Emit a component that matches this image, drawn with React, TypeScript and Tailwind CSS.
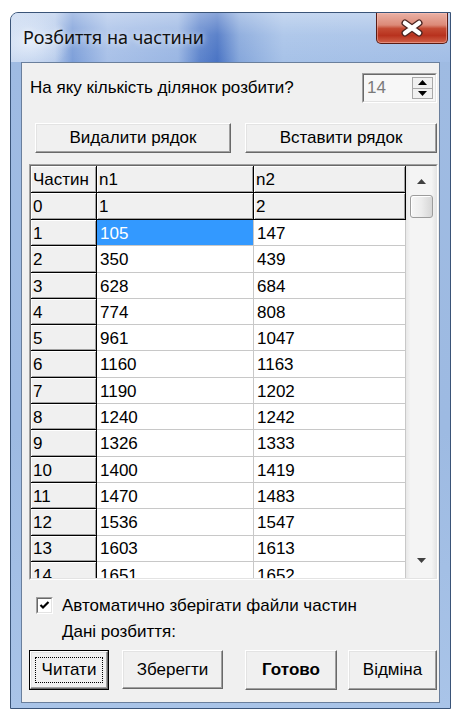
import React from "react";

const data: [string, string, string][] = [
  ["1", "105", "147"],
  ["2", "350", "439"],
  ["3", "628", "684"],
  ["4", "774", "808"],
  ["5", "961", "1047"],
  ["6", "1160", "1163"],
  ["7", "1190", "1202"],
  ["8", "1240", "1242"],
  ["9", "1326", "1333"],
  ["10", "1400", "1419"],
  ["11", "1470", "1483"],
  ["12", "1536", "1547"],
  ["13", "1603", "1613"],
  ["14", "1651", "1652"],
];

const fixedCell =
  "box-border h-full flex items-center pl-[2px] pt-[2px] bg-[#f0f0f0] border-r border-b border-black shadow-[inset_1px_1px_0_#ffffff,inset_-1px_-1px_0_#a0a0a0] overflow-hidden whitespace-nowrap";
const dataCell =
  "box-border h-full flex items-center pl-[3px] pt-[2px] bg-white border-r border-b border-[#c8c8c8] overflow-hidden whitespace-nowrap";

function Button({
  children,
  className = "",
  bold = false,
  isDefault = false,
}: {
  children: React.ReactNode;
  className?: string;
  bold?: boolean;
  isDefault?: boolean;
}) {
  const face = (
    <div className="box-border w-full h-full flex items-center justify-center bg-[#f0f0f0] border border-t-white border-l-white border-r-[#696969] border-b-[#696969] shadow-[inset_-1px_-1px_0_#a0a0a0,inset_1px_1px_0_#e3e3e3]">
      {isDefault ? (
        <div className="box-border flex items-center justify-center w-[calc(100%-8px)] h-[calc(100%-10px)] border border-dotted border-black">
          <span className={bold ? "font-bold" : ""}>{children}</span>
        </div>
      ) : (
        <span className={bold ? "font-bold" : ""}>{children}</span>
      )}
    </div>
  );
  return (
    <div className={`box-border shrink-0 ${isDefault ? "border border-black" : ""} ${className}`}>
      {face}
    </div>
  );
}

function ArrowUp({ className = "" }: { className?: string }) {
  return (
    <svg width="9" height="5" viewBox="0 0 9 5" className={className}>
      <path d="M0 5 L4.5 0 L9 5 Z" fill="currentColor" />
    </svg>
  );
}

function ArrowDown({ className = "" }: { className?: string }) {
  return (
    <svg width="9" height="5" viewBox="0 0 9 5" className={className}>
      <path d="M0 0 L9 0 L4.5 5 Z" fill="currentColor" />
    </svg>
  );
}

export default function App() {
  return (
    <div className="w-[451px] h-[709px] bg-white overflow-hidden pt-[12px] pl-[10px] font-['Liberation_Sans',Arial,sans-serif] text-[17px] text-black">
      {/* window frame */}
      <div className="relative box-border w-[441px] h-[697px] rounded-tl-[8px] border border-[#3a5478] bg-[linear-gradient(180deg,#9fbbe2_0%,#9dbae2_60%,#a9c4e8_100%)] flex flex-col">
        {/* title bar */}
        <div className="relative h-[49px] shrink-0 rounded-tl-[7px] overflow-hidden bg-[linear-gradient(90deg,#c2d4ee_0%,#b4c9ea_10%,#7d9fd9_14%,#a9c1e8_22%,#9ab6e3_38%,#5d84cc_43%,#4a74c4_47%,#86a7db_52%,#a7c2e8_62%,#a2bee6_100%)]">
          <div className="absolute inset-0 bg-[linear-gradient(180deg,rgba(255,255,255,0.35)_0%,rgba(255,255,255,0.1)_45%,rgba(255,255,255,0)_100%)]" />
          <div className="absolute left-[0px] top-[0px] w-[60px] h-[49px] bg-[radial-gradient(ellipse_at_30%_60%,rgba(235,242,252,0.8),rgba(235,242,252,0)_70%)]" />
          <div className="relative pl-[12px] pt-[12px] font-['Noto_Sans',sans-serif] text-[18px] leading-[24px] text-[#111] [text-shadow:0_0_6px_rgba(255,255,255,0.9)]">
            Розбиття на частини
          </div>
        </div>
        {/* close button */}
        <div className="absolute top-[0px] left-[365px] w-[72px] h-[31px] box-border rounded-b-[5px] border border-t-0 border-[#5a1c14] bg-[linear-gradient(180deg,#eab1a5_0%,#dc8a78_40%,#c44a33_52%,#b8321e_75%,#d0624a_100%)] flex items-center justify-center shadow-[inset_0_0_0_1px_rgba(255,200,190,0.45)]">
          <svg width="26" height="20" viewBox="0 0 26 20">
            <path d="M6 5 L20 15 M20 5 L6 15" stroke="#4a2420" strokeWidth="7" strokeLinecap="round" />
            <path d="M6 5 L20 15 M20 5 L6 15" stroke="#ffffff" strokeWidth="4.5" strokeLinecap="round" />
          </svg>
        </div>

        {/* client area */}
        <div className="box-border ml-[10px] w-[419px] h-[641px] border border-[#6a7f9c] bg-[#f0f0f0]">
          {/* partition count */}
          <div className="mt-[10px] h-[30px] flex items-center justify-between pl-[8px] pr-[2px]">
            <span>На яку кількість ділянок розбити?</span>
            <div className="box-border w-[75px] h-[30px] border border-t-[#a0a0a0] border-l-[#a0a0a0] border-r-white border-b-white">
              <div className="box-border w-full h-full border border-t-[#696969] border-l-[#696969] border-r-[#e3e3e3] border-b-[#e3e3e3] bg-[#f7f7f7] flex items-center">
                <span className="pl-[3px] text-[#7a7a7a] flex-1">14</span>
                <div className="box-border mr-[2px] w-[21px] h-[22px] flex flex-col border border-[#a8a8a8] bg-[#f0f0f0]">
                  <div className="flex-1 flex items-center justify-center border-b border-[#a8a8a8]">
                    <ArrowUp className="text-black" />
                  </div>
                  <div className="flex-1 flex items-center justify-center">
                    <ArrowDown className="text-black" />
                  </div>
                </div>
              </div>
            </div>
          </div>

          {/* row edit buttons */}
          <div className="mt-[20px] h-[30px] flex pl-[13px] gap-[14px]">
            <Button className="w-[196px] h-[30px]">Видалити рядок</Button>
            <Button className="w-[192px] h-[30px]">Вставити рядок</Button>
          </div>

          {/* string grid */}
          <div className="mt-[11px] ml-[7px] box-border w-[409px] h-[416px] border border-t-[#a0a0a0] border-l-[#a0a0a0] border-r-white border-b-white">
            <div className="box-border w-full h-full border border-t-[#696969] border-l-[#696969] border-r-[#e3e3e3] border-b-[#e3e3e3] flex bg-white">
              <div className="w-[375px] h-full overflow-hidden">
                <div className="flex h-[27px]">
                  <div className={`${fixedCell} w-[66px]`}>Частин</div>
                  <div className={`${fixedCell} w-[157px]`}>n1</div>
                  <div className={`${fixedCell} w-[152px]`}>n2</div>
                </div>
                <div className="flex h-[27px]">
                  <div className={`${fixedCell} w-[66px]`}>0</div>
                  <div className={`${fixedCell} w-[157px]`}>1</div>
                  <div className={`${fixedCell} w-[152px]`}>2</div>
                </div>
                {data.map(([n, a, b], i) => (
                  <div key={n} className="flex h-[26.3px]">
                    <div className={`${fixedCell} w-[66px]`}>{n}</div>
                    <div
                      className={
                        i === 0
                          ? "box-border h-full flex items-center pl-[3px] pt-[2px] bg-[#3399ff] text-white border-r border-b border-[#c8c8c8] w-[157px]"
                          : `${dataCell} w-[157px]`
                      }
                    >
                      {a}
                    </div>
                    <div className={`${dataCell} w-[152px]`}>{b}</div>
                  </div>
                ))}
              </div>
              {/* vertical scrollbar */}
              <div className="w-[30px] h-full flex flex-col items-center bg-[linear-gradient(90deg,#e8e8e8_0%,#f4f4f4_15%,#f4f4f4_85%,#e6e6e6_100%)]">
                <div className="h-[29px] w-full flex items-center justify-center pt-[2px]">
                  <ArrowUp className="text-[#404040]" />
                </div>
                <div className="box-border w-[23px] h-[23px] rounded-[3px] border border-[#9c9c9c] bg-[linear-gradient(90deg,#f6f6f6_0%,#ececec_50%,#d6d6d6_100%)] shadow-[inset_1px_1px_0_#ffffff]" />
                <div className="flex-1" />
                <div className="h-[30px] w-full flex items-center justify-center pb-[6px]">
                  <ArrowDown className="text-[#404040]" />
                </div>
              </div>
            </div>
          </div>

          {/* auto-save option */}
          <div className="mt-[17px] h-[17px] flex items-center pl-[14px]">
            <div className="box-border w-[17px] h-[17px] border border-t-[#a0a0a0] border-l-[#a0a0a0] border-r-white border-b-white">
              <div className="box-border w-full h-full border border-t-[#696969] border-l-[#696969] border-r-[#e3e3e3] border-b-[#e3e3e3] bg-white flex items-center justify-center">
                <svg width="11" height="11" viewBox="0 0 11 11">
                  <path d="M1.5 5 L4 7.5 L9.5 2" stroke="#000" strokeWidth="2.2" fill="none" />
                </svg>
              </div>
            </div>
            <span className="ml-[9px]">Автоматично зберігати файли частин</span>
          </div>
          <div className="mt-[8px] h-[20px] flex items-center pl-[40px]">Дані розбиття:</div>

          {/* action buttons */}
          <div className="mt-[8px] h-[40px] flex pl-[7px]">
            <Button isDefault className="w-[80px] h-[40px]">Читати</Button>
            <Button className="ml-[13px] w-[101px] h-[39px]">Зберегти</Button>
            <Button bold className="ml-[22px] w-[92px] h-[40px]">Готово</Button>
            <Button className="ml-[11px] w-[89px] h-[40px]">Відміна</Button>
          </div>
        </div>
      </div>
    </div>
  );
}
